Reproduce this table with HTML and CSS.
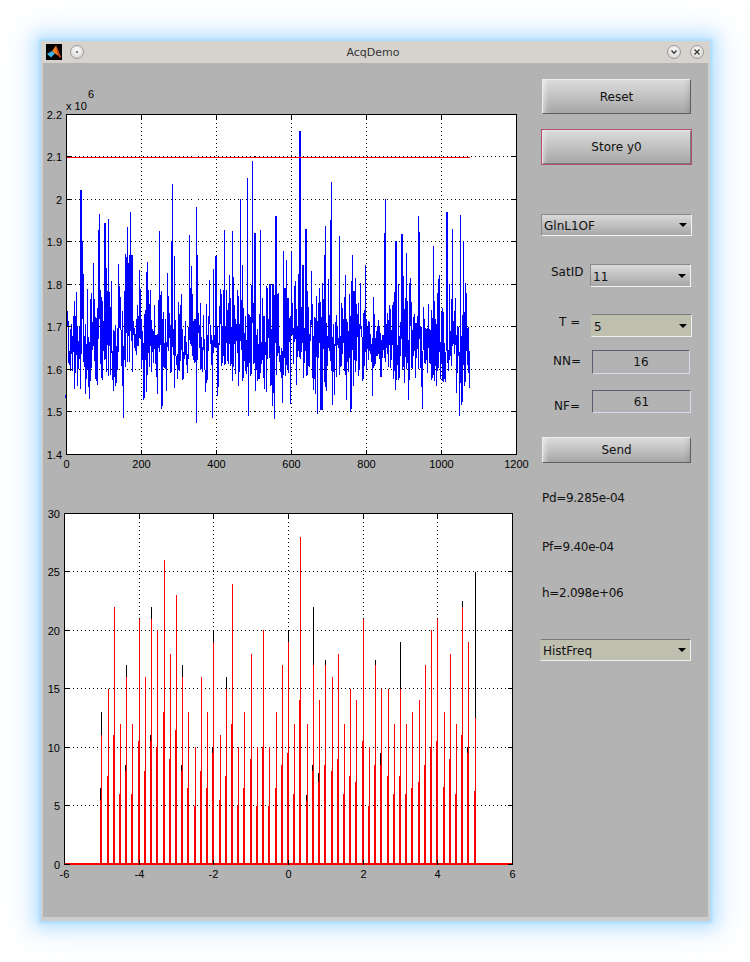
FILE: index.html
```html
<!DOCTYPE html>
<html>
<head>
<meta charset="utf-8">
<title>AcqDemo</title>
<link rel="stylesheet" href="styles.css">
</head>
<body>
<div class="window">
  <div class="titlebar">
    <span class="appicon">
      <svg width="16" height="16" viewBox="0 0 16 16">
        <rect x="0" y="0" width="16" height="16" fill="#000"/>
        <polygon points="1,10 6,7 9,9.5 5,13.5" fill="#3cb4e6"/>
        <polygon points="6,7 10,1.5 12,6 15,13.5 9,9.5" fill="#f07d1e"/>
        <polygon points="10,1.5 12,6 15,13.5 13,13.5 11,7.5" fill="#b93a18"/>
      </svg>
    </span>
    <span class="tbtn tbtn-left"><span class="tdot"></span></span>
    <span class="title">AcqDemo</span>
    <span class="tbtn">
      <svg width="8" height="8" viewBox="0 0 8 8"><polyline points="1.5,2.5 4,5.2 6.5,2.5" fill="none" stroke="#333" stroke-width="1.3"/></svg>
    </span>
    <span class="tbtn tbtn-last">
      <svg width="8" height="8" viewBox="0 0 8 8"><path d="M1.5 1.5 L6.5 6.5 M6.5 1.5 L1.5 6.5" stroke="#333" stroke-width="1.3"/></svg>
    </span>
  </div>
  <div class="client">
    <div class="plots">
      <svg id="plot1" class="plot" width="487" height="427" viewBox="43 63 487 427"></svg>
      <svg id="plot2" class="plot" width="487" height="427" viewBox="43 490 487 427"></svg>
    </div>
    <div class="panel">
      <div class="btn btn-reset">Reset</div>
      <div class="btn btn-store">Store y0</div>
      <div class="popup popup-gln"><span class="ptext">GlnL1OF</span><span class="arrow"></span></div>
      <div class="row row-sat">
        <span class="lbl lbl-sat">SatID</span>
        <div class="popup popup-sat"><span class="ptext">11</span><span class="arrow"></span></div>
      </div>
      <div class="row row-t">
        <span class="lbl lbl-t">T =</span>
        <div class="popup flat popup-t"><span class="ptext">5</span><span class="arrow"></span></div>
      </div>
      <div class="row row-nn">
        <span class="lbl lbl-nn">NN=</span>
        <div class="edit edit-nn">16</div>
      </div>
      <div class="row row-nf">
        <span class="lbl lbl-nf">NF=</span>
        <div class="edit edit-nf">61</div>
      </div>
      <div class="btn btn-send">Send</div>
      <div class="info info-pd">Pd=9.285e-04</div>
      <div class="info info-pf">Pf=9.40e-04</div>
      <div class="info info-h">h=2.098e+06</div>
      <div class="popup flat popup-hist"><span class="ptext">HistFreq</span><span class="arrow"></span></div>
    </div>
  </div>
  <div class="frame-bottom"></div>
</div>
<script src="script.js"></script>
</body>
</html>
```

FILE: styles.css
```css
html, body {
  margin: 0;
  padding: 0;
  background: #ffffff;
}
body {
  font-family: "DejaVu Sans", "Noto Sans", sans-serif;
  width: 750px;
  height: 962px;
  overflow: hidden;
}
.window {
  margin: 41px 0 0 41px;
  width: 669px;
  height: 880px;
  display: flex;
  flex-direction: column;
  background: #b3b3b3;
  box-shadow: 0 0 3px 2px #a8dcff, 0 0 16px 7px rgba(140, 205, 255, 0.55), 0 0 34px 12px rgba(180, 220, 255, 0.25);
}
.titlebar {
  height: 22px;
  flex: none;
  display: flex;
  align-items: center;
  background: #d6d3cf;
  padding: 0 6px 0 5px;
}
.appicon {
  width: 16px;
  height: 16px;
  display: block;
}
.appicon svg { display: block; }
.tbtn {
  width: 14px;
  height: 14px;
  box-sizing: border-box;
  border-radius: 50%;
  border: 1px solid #9c9a98;
  background: radial-gradient(circle at 50% 35%, #fbfbfb 0%, #e4e2e0 60%, #c9c7c5 100%);
  display: flex;
  align-items: center;
  justify-content: center;
  margin-left: 9px;
}
.tbtn svg { display: block; }
.tbtn-left { margin-left: 8px; }
.tdot {
  width: 2px;
  height: 2px;
  background: #555;
  border-radius: 50%;
}
.title {
  flex: 1;
  text-align: center;
  font-size: 11px;
  color: #333;
  padding-left: 4px;
}
.client {
  flex: 1;
  display: flex;
  border-left: 2px solid #d2d0ce;
  border-right: 2px solid #d2d0ce;
}
.plots {
  width: 487px;
  display: flex;
  flex-direction: column;
}
.plot { display: block; }
.frame-bottom {
  height: 4px;
  flex: none;
  background: #cfcdcb;
}

/* plot styles */
.bg { fill: #ffffff; }
.grid {
  stroke: #000;
  stroke-width: 1;
  stroke-dasharray: 1 3;
  shape-rendering: crispEdges;
}
.axis {
  stroke: #000;
  stroke-width: 1;
  fill: none;
  shape-rendering: crispEdges;
}
.signal {
  stroke: #0000ff;
  stroke-width: 1;
  fill: none;
  shape-rendering: crispEdges;
}
.thr {
  stroke: #ff0000;
  stroke-width: 1;
  shape-rendering: crispEdges;
}
.stem-r {
  stroke: #ff0000;
  stroke-width: 1;
  shape-rendering: crispEdges;
}
.stem-k {
  stroke: #000000;
  stroke-width: 1;
  shape-rendering: crispEdges;
}
.base-r {
  stroke: #ff0000;
  stroke-width: 2;
  shape-rendering: crispEdges;
}
.tick {
  font-family: "Liberation Sans", Arial, sans-serif;
  font-size: 11px;
  fill: #000;
}

/* right panel */
.panel {
  width: 178px;
  display: flex;
  flex-direction: column;
  align-items: flex-start;
  padding-top: 16px;
  font-size: 12px;
  color: #111;
}
.btn {
  box-sizing: border-box;
  display: flex;
  align-items: center;
  justify-content: center;
  background: linear-gradient(#dcdcdc, #c4c4c4 45%, #a6a6a6);
  border: 1px solid;
  border-color: #ececec #5e5e5e #5e5e5e #ececec;
  box-shadow: inset 5px 0 5px -3px rgba(255, 255, 255, 0.55), inset -5px 0 5px -3px rgba(0, 0, 0, 0.12);
  color: #111;
}
.btn-reset {
  margin-left: 12px;
  width: 149px;
  height: 35px;
}
.btn-store {
  margin-top: 15px;
  margin-left: 11px;
  width: 151px;
  height: 36px;
  border: 1px solid #b24b78;
  box-shadow: inset 1px 1px 0 #e6e6e6, inset -1px -1px 0 #7a7a7a, inset 5px 0 5px -3px rgba(255, 255, 255, 0.55);
}
.btn-send {
  margin-top: 24px;
  margin-left: 12px;
  width: 149px;
  height: 26px;
}
.popup {
  box-sizing: border-box;
  display: flex;
  align-items: center;
  justify-content: space-between;
  background: linear-gradient(#dadada, #c0c0c0 50%, #a8a8a8);
  border: 1px solid;
  border-color: #8a8a8a #f4f4f4 #f4f4f4 #8a8a8a;
  color: #111;
}
.popup.flat {
  background: #bfbfb0;
  border-color: #7a7a7a #f0f0f0 #f0f0f0 #bfbfb0;
}
.ptext {
  padding-left: 2px;
  padding-top: 2px;
}
.arrow {
  width: 0;
  height: 0;
  border-left: 4px solid transparent;
  border-right: 4px solid transparent;
  border-top: 4px solid #000;
  margin-right: 4px;
}
.popup-gln {
  margin-top: 49px;
  margin-left: 11px;
  width: 151px;
  height: 22px;
}
.popup-hist {
  margin-top: 39px;
  margin-left: 10px;
  width: 151px;
  height: 22px;
}
.row {
  display: flex;
  align-items: flex-start;
}
.lbl {
  box-sizing: border-box;
  line-height: 14px;
  white-space: nowrap;
}
.row-sat { margin-top: 28px; }
.lbl-sat { width: 60px; padding-left: 21px; margin-top: 1px; }
.popup-sat { width: 101px; height: 23px; }
.row-t { margin-top: 27px; }
.lbl-t { width: 61px; padding-left: 29px; margin-top: 1px; }
.popup-t { width: 101px; height: 23px; }
.row-nn { margin-top: 13px; }
.lbl-nn { width: 62px; padding-left: 23px; margin-top: 4px; }
.row-nf { margin-top: 16px; }
.lbl-nf { width: 62px; padding-left: 24px; margin-top: 9px; }
.edit {
  box-sizing: border-box;
  display: flex;
  align-items: center;
  justify-content: center;
  background: #b3b3b3;
  border: 1px solid;
  border-color: #5d5d6e #d9d9ea #d9d9ea #5d5d6e;
  color: #111;
}
.edit-nn { width: 98px; height: 24px; }
.edit-nf { width: 99px; height: 23px; }
.info {
  margin-left: 12px;
  line-height: 14px;
  letter-spacing: -0.3px;
}
.info-pd { margin-top: 28px; }
.info-pf { margin-top: 35px; }
.info-h { margin-top: 32px; }
```

FILE: script.js
```js
(function () {
  var NS = 'http://www.w3.org/2000/svg';
  function el(p, n, a) {
    var e = document.createElementNS(NS, n);
    for (var k in a) e.setAttribute(k, a[k]);
    p.appendChild(e);
    return e;
  }
  function txt(p, x, y, s, anchor) {
    var t = el(p, 'text', { x: x, y: y, 'text-anchor': anchor, 'class': 'tick' });
    t.textContent = s;
    return t;
  }
  function line(p, x1, y1, x2, y2, cls) {
    return el(p, 'line', { x1: x1, y1: y1, x2: x2, y2: y2, 'class': cls });
  }

  function mulberry32(a) {
    return function () {
      a |= 0; a = a + 0x6D2B79F5 | 0;
      var t = Math.imul(a ^ a >>> 15, 1 | a);
      t = t + Math.imul(t ^ t >>> 7, 61 | t) ^ t;
      return ((t ^ t >>> 14) >>> 0) / 4294967296;
    };
  }
  var rnd = mulberry32(20240611);
  function gauss() {
    var u = 0;
    while (u === 0) u = rnd();
    var v = rnd();
    return Math.sqrt(-2 * Math.log(u)) * Math.cos(2 * Math.PI * v);
  }

  /* ---------- top plot ---------- */
  var s1 = document.getElementById('plot1');
  var L = 66.5, R = 516.5, T = 114.5, B = 454.5;
  function px1(v) { return 66 + v * 0.375; }
  function py1(v) { return 114 + (2.2 - v) * 425; }
  el(s1, 'rect', { x: L, y: T, width: R - L, height: B - T, 'class': 'bg' });

  var xt = [0, 200, 400, 600, 800, 1000, 1200];
  var yt = [1.4, 1.5, 1.6, 1.7, 1.8, 1.9, 2, 2.1, 2.2];
  var i;
  for (i = 1; i < xt.length - 1; i++) {
    var gx = Math.floor(px1(xt[i])) + 0.5;
    line(s1, gx, T, gx, B, 'grid');
  }
  for (i = 1; i < yt.length - 1; i++) {
    var gy = Math.floor(py1(yt[i])) + 0.5;
    line(s1, L, gy, R, gy, 'grid');
  }

  var N = 1077, vals = [];
  for (i = 0; i < N; i++) {
    var g2 = Math.max(0, gauss());
    var v = 1.64 + 0.052 * gauss() + 0.04 * Math.pow(g2, 1.5);
    if (rnd() < 0.1) v += -Math.log(rnd() + 1e-9) * 0.09;
    if (v < 1.48) v = 1.48 + rnd() * 0.04;
    if (v > 2.0) v = 1.88 + rnd() * 0.1;
    vals.push(v);
  }
  var spikes = { 40: 2.02, 45: 1.9, 113: 1.953, 160: 1.87, 249: 1.925, 283: 2.035, 290: 1.865, 330: 1.915,
    465: 2.0, 470: 1.845, 484: 2.05, 497: 2.09, 505: 1.92, 560: 1.96, 624: 2.16, 640: 1.93, 707: 2.04,
    760: 1.93, 851: 2.0, 880: 1.9, 940: 1.96, 980: 1.89, 1016: 1.97, 1030: 1.93, 1060: 1.9 };
  var lows = { 154: 1.485, 348: 1.472, 391: 1.485, 486: 1.49, 760: 1.5, 950: 1.505, 1050: 1.49 };
  for (var k in spikes) vals[+k] = spikes[k];
  for (var k2 in lows) vals[+k2] = lows[k2];
  var pts = [];
  for (i = 0; i < N; i++) {
    pts.push((66 + i * 0.375).toFixed(2) + ',' + py1(vals[i]).toFixed(2));
  }
  el(s1, 'polyline', { points: pts.join(' '), 'class': 'signal' });

  line(s1, 66, 157.5, 470, 157.5, 'thr');

  el(s1, 'rect', { x: L, y: T, width: R - L, height: B - T, 'class': 'axis' });
  for (i = 0; i < xt.length; i++) {
    var tx = Math.floor(px1(xt[i])) + 0.5;
    line(s1, tx, B, tx, B - 5, 'axis');
    line(s1, tx, T, tx, T + 5, 'axis');
    txt(s1, tx, 468, String(xt[i]), 'middle');
  }
  for (i = 0; i < yt.length; i++) {
    var ty = Math.floor(py1(yt[i])) + 0.5;
    line(s1, L, ty, L + 5, ty, 'axis');
    line(s1, R, ty, R - 5, ty, 'axis');
    txt(s1, 62, ty + 4, String(yt[i]), 'end');
  }
  txt(s1, 66, 110, 'x 10', 'start');
  txt(s1, 88, 98, '6', 'start');

  /* ---------- bottom plot ---------- */
  var s2 = document.getElementById('plot2');
  var L2 = 64.5, R2 = 512.5, T2 = 513.5, B2 = 864.5;
  function px2(u) { return 288 + u * 37.333; }
  function py2(v) { return 864 - v * 11.683; }
  el(s2, 'rect', { x: L2, y: T2, width: R2 - L2, height: B2 - T2, 'class': 'bg' });

  var tall = [11, 15, 22, 12, 16, 12, 21, 16, 21, 20, 26, 18, 23, 16, 13, 10, 16, 13, 19, 11, 15, 24, 10, 13, 18, 10,
    20, 10, 13, 17, 19, 12, 28, 12, 17, 14, 17, 16, 18, 12, 15, 14, 21, 10, 17, 15, 15, 12, 15, 12, 13, 14, 17, 20,
    21, 13, 18, 12, 22, 19, 12.5];
  var shortOv = { 0: 5.5, 33: 5.4, 34: 8, 45: 8.5, 48: 7.5, 55: 6.6 };
  var bt = { 0: 13, 4: 17, 8: 22, 13: 17, 18: 20, 20: 16, 30: 20, 34: 22, 36: 17.5, 44: 17.5, 48: 19, 58: 22.5, 60: 25 };
  var bs = { 0: 6.5, 4: 8.5, 8: 11, 13: 8.5, 18: 10, 33: 5.9, 34: 8.5, 35: 7.8, 45: 9.5, 59: 10 };

  var xt2 = [-6, -4, -2, 0, 2, 4, 6];
  var yt2 = [0, 5, 10, 15, 20, 25, 30];
  for (i = 1; i < xt2.length - 1; i++) {
    var g2x = Math.round(px2(xt2[i])) + 0.5;
    line(s2, g2x, T2, g2x, B2, 'grid');
  }
  for (i = 1; i < yt2.length - 1; i++) {
    var g2y = Math.floor(py2(yt2[i])) + 0.5;
    line(s2, L2, g2y, R2, g2y, 'grid');
  }

  for (i = 0; i < 61; i++) {
    var xk = Math.round(px2(-5 + i / 6)) + 0.5;
    var xs = xk - 1;
    var sh = shortOv.hasOwnProperty(i) ? shortOv[i] : tall[i] / 2;
    if (bt.hasOwnProperty(i)) line(s2, xk, 864, xk, py2(bt[i]), 'stem-k');
    if (bs.hasOwnProperty(i)) line(s2, xs, 864, xs, py2(bs[i]), 'stem-k');
    line(s2, xk, 864, xk, py2(tall[i]), 'stem-r');
    line(s2, xs, 864, xs, py2(sh), 'stem-r');
  }

  el(s2, 'rect', { x: L2, y: T2, width: R2 - L2, height: B2 - T2, 'class': 'axis' });
  line(s2, 64, 864, 512, 864, 'base-r');
  for (i = 0; i < xt2.length; i++) {
    var t2x = Math.round(px2(xt2[i])) + 0.5;
    line(s2, t2x, B2, t2x, B2 - 5, 'axis');
    line(s2, t2x, T2, t2x, T2 + 5, 'axis');
    txt(s2, t2x, 878, String(xt2[i]), 'middle');
  }
  for (i = 0; i < yt2.length; i++) {
    var t2y = Math.floor(py2(yt2[i])) + 0.5;
    line(s2, L2, t2y, L2 + 5, t2y, 'axis');
    line(s2, R2, t2y, R2 - 5, t2y, 'axis');
    txt(s2, 60, t2y + 4, String(yt2[i]), 'end');
  }
})();
```
